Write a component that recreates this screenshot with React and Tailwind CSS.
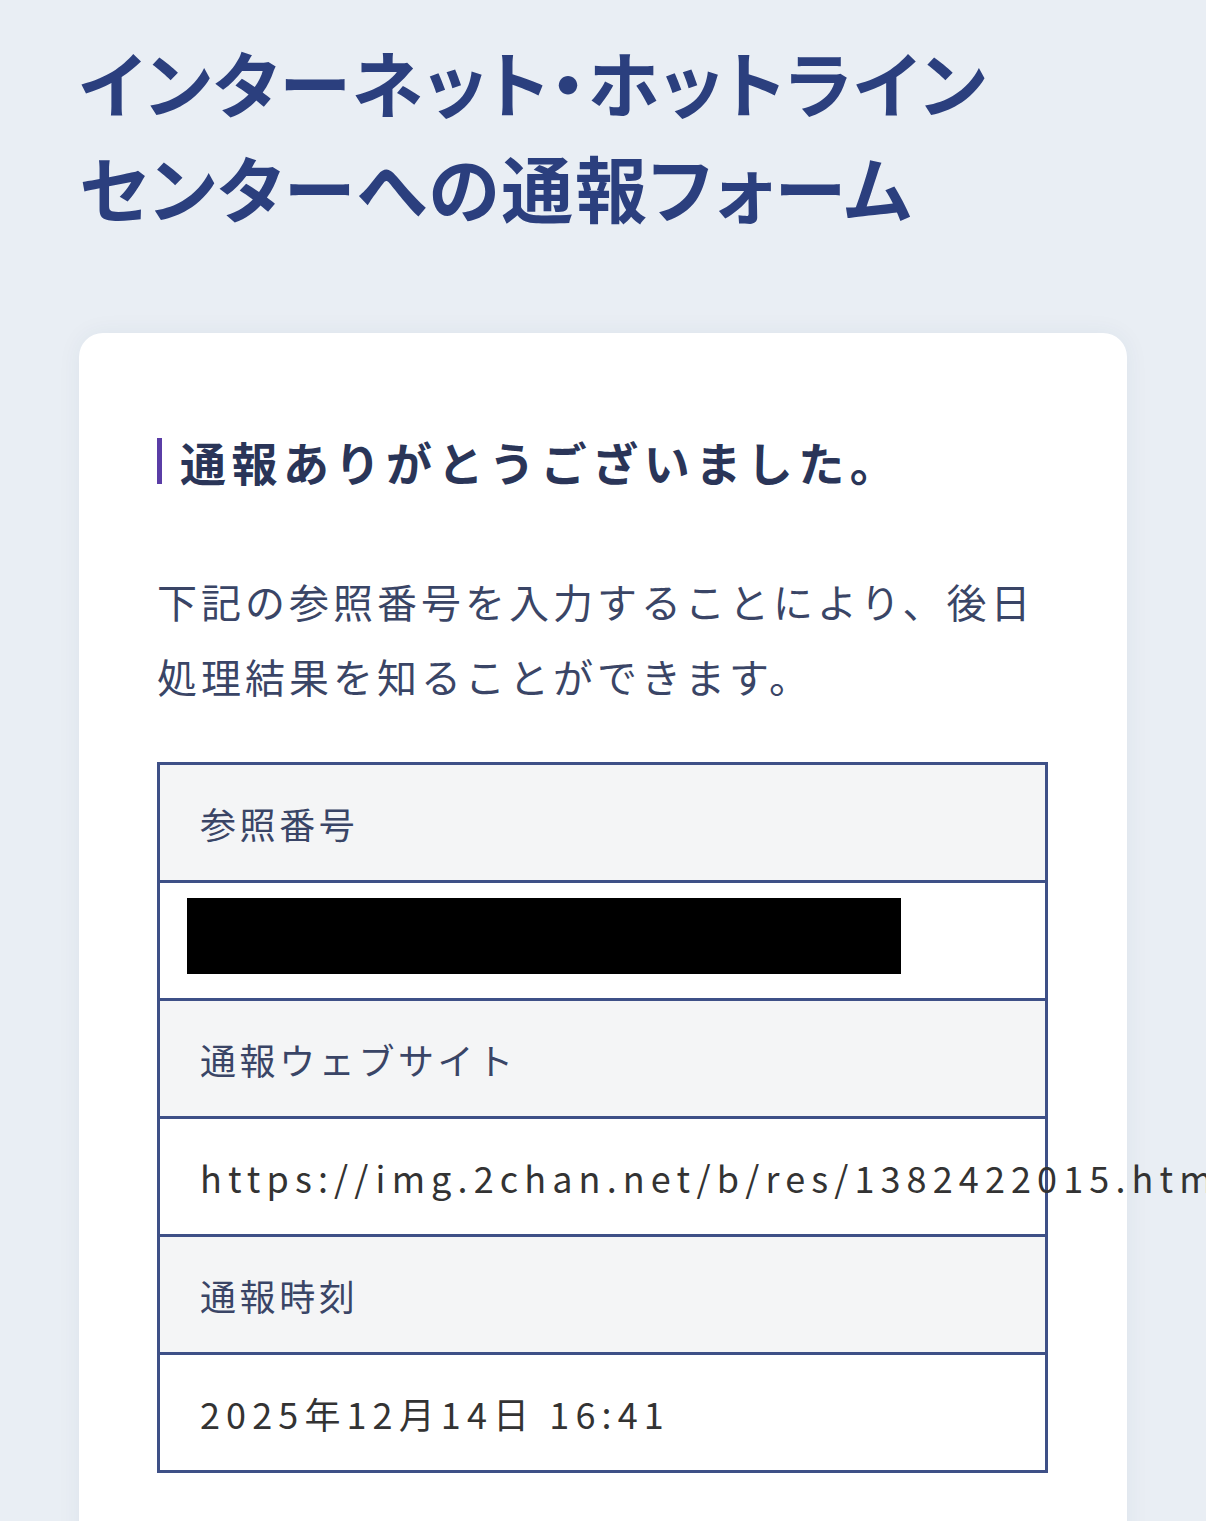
export default function App() {
  const font = { fontFamily: '"Noto Sans CJK JP", "Noto Sans", sans-serif' };
  const rows = [
    { label: "参照番号", value: null },
    { label: "通報ウェブサイト", value: "https://img.2chan.net/b/res/1382422015.html" },
    { label: "通報時刻", value: "2025年12月14日 16:41" },
  ];
  return (
    <div
      className="w-[1206px] h-[1521px] overflow-hidden bg-[#e9eef4] px-[79px] pt-[28px]"
      style={font}
    >
      <h1 className="text-[72px] leading-[105px] font-bold text-[#2b3f7e] [font-feature-settings:'palt'] tracking-[0.025em]">
        インターネット・ホットライン
        <br />
        センターへの通報フォーム
      </h1>
      <div className="mt-[95px] bg-white rounded-[24px] shadow-[0_0_24px_rgba(40,60,110,0.06)] px-[78px] pt-[100px] pb-[120px]">
        <div className="flex items-center">
          <div className="w-[5px] h-[46px] bg-[#5a3da6] mr-[18px]" />
          <h2 className="text-[46px] leading-[56px] font-bold text-[#2a3558] tracking-[0.12em]">
            通報ありがとうございました。
          </h2>
        </div>
        <p className="mt-[75px] text-[40px] leading-[75px] tracking-[0.1em] text-[#3a4566]">
          下記の参照番号を入力することにより、後日
          <br />
          処理結果を知ることができます。
        </p>
        <div className="mt-[48px] w-[891px] border-[3px] border-[#3e5087]">
          {rows.map((r, i) => (
            <div key={i}>
              <div
                className={`flex items-center pl-[40px] bg-[#f4f5f6] text-[36px] tracking-[0.1em] text-[#3a4566] ${
                  i > 0 ? "h-[118px] border-t-[3px] border-[#3e5087]" : "h-[115px]"
                }`}
              >
                {r.label}
              </div>
              <div className="h-[118px] flex items-center border-t-[3px] border-[#3e5087] bg-white">
                {r.value === null ? (
                  <div className="self-start mt-[15px] ml-[27px] w-[714px] h-[76px] bg-black" />
                ) : (
                  <div className="pl-[40px] whitespace-nowrap text-[36px] tracking-[0.17em] text-[#333333]">
                    {r.value}
                  </div>
                )}
              </div>
            </div>
          ))}
        </div>
      </div>
    </div>
  );
}
